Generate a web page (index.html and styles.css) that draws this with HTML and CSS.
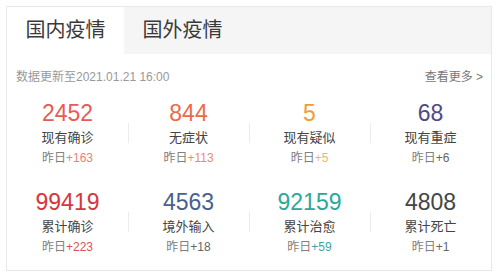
FILE: index.html
```
<!DOCTYPE html>
<html lang="zh-CN">
<head>
    <meta charset="UTF-8">
    <meta name="viewport" content="width=device-width, initial-scale=1.0">
    <title>疫情数据</title>
    <link rel="stylesheet" href="styles.css">
</head>
<body>
    <div class="card">
        <div class="tabs">
            <div class="tab active">国内疫情</div>
            <div class="tab">国外疫情</div>
        </div>
        <div class="info">
            <span class="update">数据更新至2021.01.21 16:00</span>
            <a class="more" href="#">查看更多 &gt;</a>
        </div>
        <div class="stats">
            <div class="stat">
                <div class="num c-red">2452</div>
                <div class="label">现有确诊</div>
                <div class="yest">昨日<span class="c-red-l">+163</span></div>
            </div>
            <div class="stat line">
                <div class="num c-orange">844</div>
                <div class="label">无症状</div>
                <div class="yest">昨日<span class="c-orange-l">+113</span></div>
            </div>
            <div class="stat line">
                <div class="num c-yellow">5</div>
                <div class="label">现有疑似</div>
                <div class="yest">昨日<span class="c-yellow-l">+5</span></div>
            </div>
            <div class="stat line">
                <div class="num c-purple">68</div>
                <div class="label">现有重症</div>
                <div class="yest">昨日<span class="c-gray">+6</span></div>
            </div>
            <div class="stat">
                <div class="num c-crimson">99419</div>
                <div class="label">累计确诊</div>
                <div class="yest">昨日<span class="c-crimson-l">+223</span></div>
            </div>
            <div class="stat line">
                <div class="num c-blue">4563</div>
                <div class="label">境外输入</div>
                <div class="yest">昨日<span class="c-gray">+18</span></div>
            </div>
            <div class="stat line">
                <div class="num c-teal">92159</div>
                <div class="label">累计治愈</div>
                <div class="yest">昨日<span class="c-teal-l">+59</span></div>
            </div>
            <div class="stat line">
                <div class="num c-dark">4808</div>
                <div class="label">累计死亡</div>
                <div class="yest">昨日<span class="c-gray">+1</span></div>
            </div>
        </div>
    </div>
</body>
</html>
```
FILE: styles.css
```
body {
    font-family: "Liberation Sans", Arial, "Noto Sans CJK SC", sans-serif;
    background-color: #fff;
    margin: 0;
    padding: 6px 7px 0 6px;
}

.card {
    border: 1px solid #e8e8e8;
    background-color: #fff;
    padding-bottom: 13px;
}

.tabs {
    display: flex;
    height: 47px;
    background-color: #f5f5f5;
}

.tab {
    width: 117px;
    font-size: 20px;
    line-height: 47px;
    text-align: center;
    color: #3a3a3a;
}

.tab.active {
    background-color: #fff;
}

.info {
    display: flex;
    justify-content: space-between;
    padding: 16px 8px 0 9px;
    font-size: 12px;
    line-height: 14px;
}

.update {
    color: #999;
}

.more {
    color: #777;
    text-decoration: none;
}

.stats {
    display: grid;
    grid-template-columns: repeat(4, 1fr);
    row-gap: 21px;
    padding-top: 16px;
}

.stat {
    text-align: center;
}

.stat.line {
    background: linear-gradient(#ececec, #ececec) no-repeat 0 23px / 1px 20px;
}

.num {
    font-size: 23px;
    line-height: 26px;
    height: 28px;
}

.label {
    font-size: 13px;
    line-height: 20px;
    color: #444;
}

.yest {
    font-size: 12px;
    line-height: 20px;
    color: #808080;
}

.c-red { color: #e85a55; }
.c-red-l { color: #e8827c; }
.c-orange { color: #ec6a4a; }
.c-orange-l { color: #ea8c70; }
.c-yellow { color: #ef9d30; }
.c-yellow-l { color: #f0b56a; }
.c-purple { color: #4d4a8c; }
.c-crimson { color: #d8343c; }
.c-crimson-l { color: #d9525a; }
.c-blue { color: #4a5f8c; }
.c-teal { color: #2ea79b; }
.c-teal-l { color: #3fa2a8; }
.c-dark { color: #454545; }
.c-gray { color: #666; }
```
